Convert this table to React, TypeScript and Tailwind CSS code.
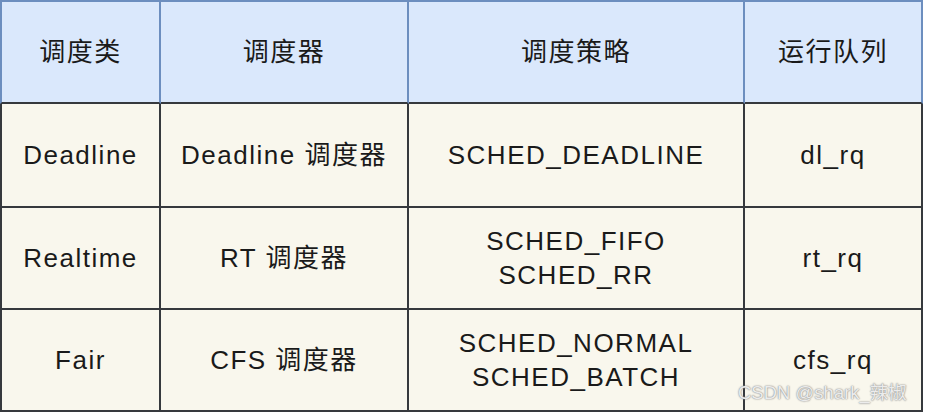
import React from 'react';

const headers = ['调度类', '调度器', '调度策略', '运行队列'];

const rows: { h: string; cells: string[][] }[] = [
  { h: 'h-[104px]', cells: [['Deadline'], ['Deadline 调度器'], ['SCHED_DEADLINE'], ['dl_rq']] },
  { h: 'h-[102px]', cells: [['Realtime'], ['RT 调度器'], ['SCHED_FIFO', 'SCHED_RR'], ['rt_rq']] },
  { h: 'h-[102px]', cells: [['Fair'], ['CFS 调度器'], ['SCHED_NORMAL', 'SCHED_BATCH'], ['cfs_rq']] },
];

export default function App() {
  return (
    <div className="relative w-[925px] h-[414px] bg-white text-[#1a1a1a] text-[26px] leading-[34px] tracking-[1.5px] [font-family:'Liberation_Sans','Noto_Sans_CJK_SC',sans-serif]">
      <div className="grid grid-cols-[161px_248px_336px_178px]">
        {/* header */}
        {headers.map((t, i) => (
          <div
            key={t}
            className={`h-[104px] flex items-center justify-center bg-[#dae8fc] border-t-2 border-r-2 border-b-2 border-t-[#6c8ebf] border-r-[#6c8ebf] border-b-[#36393d] ${
              i === 0 ? 'border-l-2 border-l-[#6c8ebf]' : ''
            }`}
          >
            {t}
          </div>
        ))}

        {/* body */}
        {rows.map((r, ri) =>
          r.cells.map((lines, ci) => (
            <div
              key={`${ri}-${ci}`}
              className={`${r.h} flex flex-col items-center justify-center text-center bg-[#f9f7ed] border-r-2 border-b-2 border-[#36393d] ${
                ci === 0 ? 'border-l-2' : ''
              }`}
            >
              {lines.map((l) => (
                <span key={l}>{l}</span>
              ))}
            </div>
          ))
        )}
      </div>

      {/* watermark */}
      <div className="absolute left-[738px] top-[382px] text-[18.5px] leading-[22px] tracking-normal text-[#ececec] [text-shadow:0_0_2px_#8a8a8a,0_0_1px_#9a9a9a]">
        CSDN @shark_辣椒
      </div>
    </div>
  );
}
